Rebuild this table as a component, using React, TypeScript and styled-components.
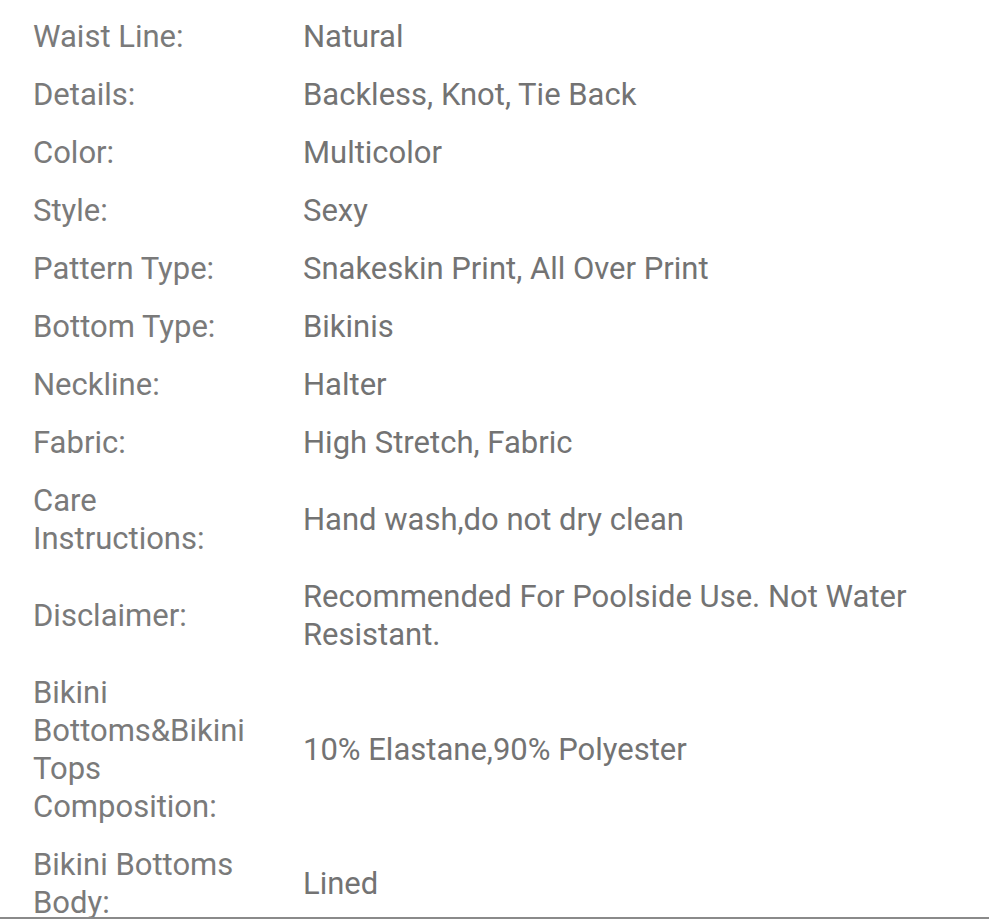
import React from 'react';
import styled, { createGlobalStyle } from 'styled-components';

const GlobalStyle = createGlobalStyle`
  html, body {
    margin: 0;
    padding: 0;
    background: #ffffff;
  }
  body {
    font-family: Roboto, "Noto Sans", "Liberation Sans", sans-serif;
  }
`;

const Screen = styled.div`
  position: relative;
  width: 989px;
  height: 919px;
  overflow: hidden;
  background: #ffffff;
`;

const SpecList = styled.div`
  display: flex;
  flex-direction: column;
  padding-top: 8px;
`;

const SpecRow = styled.div`
  display: grid;
  grid-template-columns: 270px 1fr;
  align-items: center;
  padding: 10px 30px 10px 33px;
  font-size: 31px;
  line-height: 38px;
`;

const Label = styled.div`
  color: #7a7a7a;
  padding-right: 30px;
`;

const Value = styled.div`
  color: #737373;
`;

const BottomEdge = styled.div`
  position: absolute;
  left: 0;
  right: 0;
  bottom: 0;
  height: 2px;
  background: #8a8a8a;
`;

const specs: [string, string][] = [
  ['Waist Line:', 'Natural'],
  ['Details:', 'Backless, Knot, Tie Back'],
  ['Color:', 'Multicolor'],
  ['Style:', 'Sexy'],
  ['Pattern Type:', 'Snakeskin Print, All Over Print'],
  ['Bottom Type:', 'Bikinis'],
  ['Neckline:', 'Halter'],
  ['Fabric:', 'High Stretch, Fabric'],
  ['Care Instructions:', 'Hand wash,do not dry clean'],
  ['Disclaimer:', 'Recommended For Poolside Use. Not Water Resistant.'],
  ['Bikini Bottoms&Bikini Tops Composition:', '10% Elastane,90% Polyester'],
  ['Bikini Bottoms Body:', 'Lined'],
  ['Bikini Tops Body:', 'Lined'],
];

export default function App() {
  return (
    <Screen>
      <GlobalStyle />
      <SpecList>
        {specs.map(([label, value]) => (
          <SpecRow key={label}>
            <Label>{label}</Label>
            <Value>{value}</Value>
          </SpecRow>
        ))}
      </SpecList>
      <BottomEdge />
    </Screen>
  );
}
